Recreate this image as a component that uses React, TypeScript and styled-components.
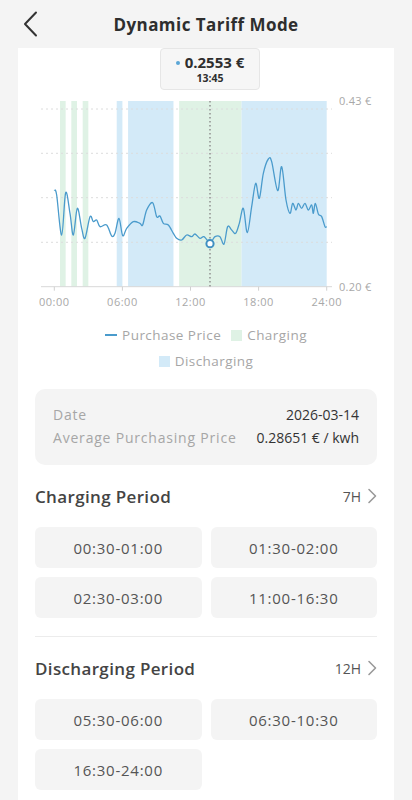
import React from 'react';
import styled, { createGlobalStyle } from 'styled-components';

const GlobalStyle = createGlobalStyle`
    body {
        margin: 0;
        background: #f4f4f4;
        font-family: 'Open Sans', 'Liberation Sans', sans-serif;
    }
`;

// trace of the price line, sampled from the design at 3x (x, y)
const trace: [number, number][] = [
    [163, 300], [170, 315], [185, 435], [197, 308], [210, 370], [220, 435], [232, 355], [245, 415],
    [255, 445], [270, 380], [280, 395], [290, 390], [300, 410], [320, 405], [335, 438], [345, 430],
    [357, 385], [368, 437], [380, 415], [400, 395], [420, 400], [428, 405], [440, 360], [458, 338],
    [470, 380], [480, 378], [490, 400], [505, 405], [520, 430], [530, 445], [545, 450], [560, 435],
    [575, 440], [585, 432], [600, 445], [612, 440], [630, 458], [645, 440], [660, 440], [672, 462],
    [683, 410], [695, 420], [707, 430], [718, 400], [730, 355], [742, 428], [755, 350], [767, 280],
    [778, 325], [790, 250], [805, 207], [815, 215], [833, 302], [845, 230], [858, 330], [870, 370],
    [878, 340], [888, 360], [895, 340], [905, 355], [915, 340], [925, 360], [935, 345], [940, 370],
    [946, 340], [955, 372], [965, 380], [975, 410], [980, 410],
];

const X0 = 54.3;
const HOUR = 11.35;
const TOP = 101;
const BOTTOM = 286.7;
const hx = (h: number) => X0 + h * HOUR;

const charging = [[0.5, 1], [1.5, 2], [2.5, 3], [11, 16.5]];
const discharging = [[5.5, 6], [6.5, 10.5], [16.5, 24]];
const grid = [109, 153.3, 197.7, 242.3];

function smoothPath(pts: [number, number][]) {
    const p = pts.map(([x, y]) => [x / 3, 90 + y / 3]);
    let d = `M${p[0][0]},${p[0][1]}`;
    for (let i = 0; i < p.length - 1; i++) {
        const a = p[i - 1] || p[i];
        const b = p[i];
        const c = p[i + 1];
        const e = p[i + 2] || c;
        const c1 = [b[0] + (c[0] - a[0]) / 6, b[1] + (c[1] - a[1]) / 6];
        const c2 = [c[0] - (e[0] - b[0]) / 6, c[1] - (e[1] - b[1]) / 6];
        d += ` C${c1[0]},${c1[1]} ${c2[0]},${c2[1]} ${c[0]},${c[1]}`;
    }
    return d;
}

const chargingSlots = ['00:30-01:00', '01:30-02:00', '02:30-03:00', '11:00-16:30'];
const dischargingSlots = ['05:30-06:00', '06:30-10:30', '16:30-24:00'];

function PriceChart() {
    return (
        <StyledChart viewBox="18 92 376 218" width={376} height={218}>
            {charging.map(([s, e]) => (
                <rect key={`c${s}`} x={hx(s)} y={TOP} width={(e - s) * HOUR} height={BOTTOM - TOP} fill="#dff2e5" />
            ))}
            {discharging.map(([s, e]) => (
                <rect key={`d${s}`} x={hx(s)} y={TOP} width={(e - s) * HOUR} height={BOTTOM - TOP} fill="#d3eaf8" />
            ))}
            {grid.map((y) => (
                <line key={y} x1={41} x2={332} y1={y} y2={y} stroke="#dcdcdc" strokeWidth={1} strokeDasharray="2 3" />
            ))}
            <line x1={41} x2={332} y1={BOTTOM} y2={BOTTOM} stroke="#d8d8d8" strokeWidth={1} />
            {[0, 6, 12, 18, 24].map((h) => (
                <g key={h}>
                    <line x1={hx(h)} x2={hx(h)} y1={BOTTOM} y2={BOTTOM + 4} stroke="#d0d0d0" />
                    <text x={hx(h)} y={306} textAnchor="middle" fontSize={11} letterSpacing={0.5} fill="#a8a8a8">
                        {String(h).padStart(2, '0')}:00
                    </text>
                </g>
            ))}
            <text x={339} y={105} fontSize={11} letterSpacing={0.3} fill="#a8a8a8">0.43 €</text>
            <text x={339} y={291} fontSize={11} letterSpacing={0.3} fill="#a8a8a8">0.20 €</text>
            <line x1={210} x2={210} y1={TOP} y2={BOTTOM} stroke="#8a8a8a" strokeWidth={1.4} strokeDasharray="1.5 2.5" />
            <path d={smoothPath(trace)} fill="none" stroke="#4a9bcc" strokeWidth={1.3} />
            <circle cx={210} cy={243.7} r={3.6} fill="#fff" stroke="#3f8fc2" strokeWidth={2} />
        </StyledChart>
    );
}

function BackIcon() {
    return (
        <svg width="16" height="26" viewBox="0 0 16 26" fill="none">
            <path d="M13 1.5 L2 13 L13 24.5" stroke="#333" strokeWidth="2" strokeLinecap="round" strokeLinejoin="round" />
        </svg>
    );
}

function ChevronRight() {
    return (
        <svg width="10" height="16" viewBox="0 0 10 16" fill="none">
            <path d="M2 1.5 L8.5 8 L2 14.5" stroke="#9a9a9a" strokeWidth="1.6" strokeLinecap="round" strokeLinejoin="round" />
        </svg>
    );
}

function PeriodSection({ title, total, slots }: { title: string; total: string; slots: string[] }) {
    return (
        <StyledSection>
            <StyledSectionHead>
                <StyledSectionTitle>{title}</StyledSectionTitle>
                <StyledSectionTotal>
                    {total}
                    <ChevronRight />
                </StyledSectionTotal>
            </StyledSectionHead>
            <StyledChipGrid>
                {slots.map((s) => (
                    <StyledChip key={s}>{s}</StyledChip>
                ))}
            </StyledChipGrid>
        </StyledSection>
    );
}

export default function App() {
    return (
        <>
            <GlobalStyle />
            <StyledHeader>
                <StyledBackButton>
                    <BackIcon />
                </StyledBackButton>
                <StyledTitle>Dynamic Tariff Mode</StyledTitle>
            </StyledHeader>
            <StyledCard>
                <StyledTooltip>
                    <StyledTooltipValue>
                        <StyledDot />
                        0.2553 €
                    </StyledTooltipValue>
                    <StyledTooltipTime>13:45</StyledTooltipTime>
                </StyledTooltip>
                <PriceChart />
                <StyledLegend>
                    <StyledLegendItem>
                        <StyledLegendDash />
                        Purchase Price
                    </StyledLegendItem>
                    <StyledLegendItem>
                        <StyledLegendSwatch color="#dff2e5" />
                        Charging
                    </StyledLegendItem>
                    <StyledLegendBreak />
                    <StyledLegendItem>
                        <StyledLegendSwatch color="#d3eaf8" />
                        Discharging
                    </StyledLegendItem>
                </StyledLegend>
                <StyledBody>
                    <StyledInfoBox>
                        <StyledInfoRow>
                            <StyledInfoLabel>Date</StyledInfoLabel>
                            <StyledInfoValue>2026-03-14</StyledInfoValue>
                        </StyledInfoRow>
                        <StyledInfoRow>
                            <StyledInfoLabel>Average Purchasing Price</StyledInfoLabel>
                            <StyledInfoValue>0.28651 € / kwh</StyledInfoValue>
                        </StyledInfoRow>
                    </StyledInfoBox>
                    <PeriodSection title="Charging Period" total="7H" slots={chargingSlots} />
                    <StyledDivider />
                    <PeriodSection title="Discharging Period" total="12H" slots={dischargingSlots} />
                </StyledBody>
            </StyledCard>
        </>
    );
}

const StyledHeader = styled.header`
    position: relative;
    height: 48px;
    display: flex;
    align-items: center;
    justify-content: center;
`;

const StyledBackButton = styled.div`
    position: absolute;
    left: 23px;
    top: 11px;
    display: flex;
`;

const StyledTitle = styled.h1`
    margin: 0;
    font-size: 17px;
    font-weight: 700;
    letter-spacing: 0.45px;
    color: #2e2e2e;
`;

const StyledCard = styled.main`
    position: relative;
    margin: 0 18px;
    background: #fff;
    padding-top: 44px;
    padding-bottom: 20px;
`;

const StyledChart = styled.svg`
    display: block;
    font-family: 'Open Sans', 'Liberation Sans', sans-serif;
`;

const StyledTooltip = styled.div`
    position: absolute;
    top: 0;
    left: 142px;
    width: 100px;
    height: 42px;
    box-sizing: border-box;
    background: #f6f6f6;
    border: 1px solid #e6e6e6;
    border-radius: 4px;
    display: flex;
    flex-direction: column;
    align-items: center;
    justify-content: center;
    color: #2e2e2e;
`;

const StyledTooltipValue = styled.div`
    display: flex;
    align-items: center;
    gap: 5px;
    font-size: 15px;
    font-weight: 700;
    line-height: 19px;
`;

const StyledDot = styled.span`
    width: 4px;
    height: 4px;
    border-radius: 50%;
    background: #5aa6d6;
`;

const StyledTooltipTime = styled.div`
    font-size: 10.5px;
    font-weight: 700;
    line-height: 13px;
`;

const StyledLegend = styled.div`
    margin-top: 12px;
    display: flex;
    flex-wrap: wrap;
    justify-content: center;
    column-gap: 10px;
    padding: 0 50px;
`;

const StyledLegendItem = styled.div`
    display: flex;
    align-items: center;
    gap: 5px;
    height: 26px;
    font-size: 13.5px;
    letter-spacing: 0.45px;
    color: #a6a6a6;
`;

const StyledLegendBreak = styled.div`
    flex-basis: 100%;
`;

const StyledLegendDash = styled.span`
    width: 12px;
    height: 2px;
    background: #4a9bcc;
`;

const StyledLegendSwatch = styled.span<{ color: string }>`
    width: 11px;
    height: 11px;
    background: ${(p) => p.color};
`;

const StyledBody = styled.div`
    padding: 0 17px;
`;

const StyledInfoBox = styled.div`
    margin-top: 15px;
    background: #f4f4f4;
    border-radius: 10px;
    padding: 14px 18px 16px;
`;

const StyledInfoRow = styled.div`
    display: flex;
    justify-content: space-between;
    align-items: center;
    height: 23px;
    font-size: 14px;
`;

const StyledInfoLabel = styled.span`
    color: #a6a6a6;
    letter-spacing: 0.8px;
`;

const StyledInfoValue = styled.span`
    color: #333;
`;

const StyledSection = styled.section`
    padding-top: 19px;
`;

const StyledSectionHead = styled.div`
    display: flex;
    justify-content: space-between;
    align-items: center;
    height: 24px;
`;

const StyledSectionTitle = styled.h2`
    margin: 0;
    font-size: 17px;
    font-weight: 600;
    letter-spacing: 0.35px;
    color: #444;
`;

const StyledSectionTotal = styled.div`
    display: flex;
    align-items: center;
    gap: 6px;
    font-size: 14px;
    color: #555;
`;

const StyledChipGrid = styled.div`
    margin-top: 19px;
    display: grid;
    grid-template-columns: 1fr 1fr;
    gap: 9px 9px;
`;

const StyledChip = styled.div`
    height: 41px;
    border-radius: 6px;
    background: #f4f4f4;
    display: flex;
    align-items: center;
    justify-content: center;
    font-size: 15px;
    letter-spacing: 0.75px;
    color: #555;
`;

const StyledDivider = styled.hr`
    margin: 18px 0 0;
    border: none;
    border-top: 1px solid #ececec;
`;
